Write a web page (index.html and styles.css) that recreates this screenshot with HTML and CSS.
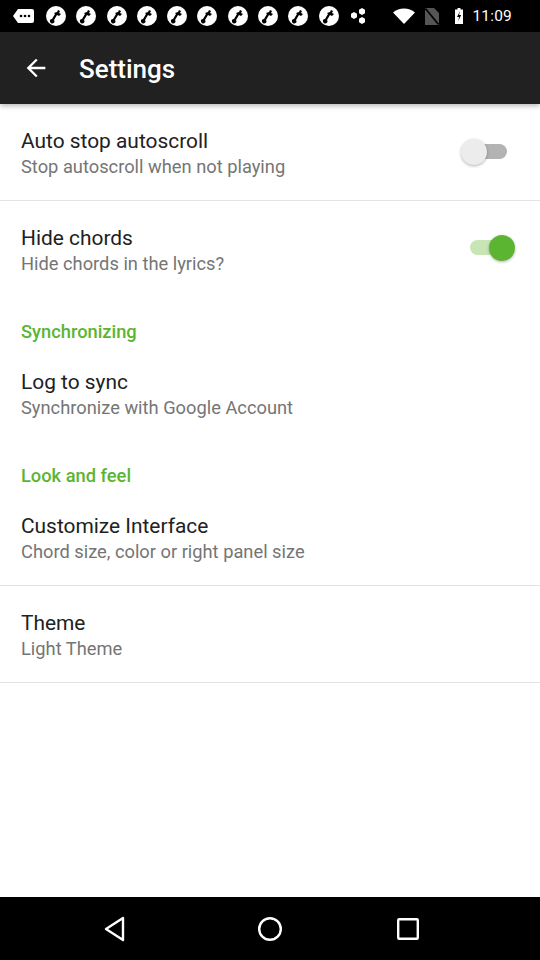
FILE: index.html
```html
<!DOCTYPE html>
<html>
<head>
<meta charset="utf-8">
<link rel="stylesheet" href="styles.css">
</head>
<body>
<div class="screen">
  <div class="statusbar">
    <div class="sb-left">
      <svg class="kb" width="21" height="14" viewBox="0 0 21 14"><path d="M5 0H19a2 2 0 0 1 2 2V12a2 2 0 0 1-2 2H5L0 7z" fill="#fff"/><circle cx="8" cy="7" r="1.3" fill="#000"/><circle cx="12" cy="7" r="1.3" fill="#000"/><circle cx="16" cy="7" r="1.3" fill="#000"/></svg>
      <div class="notifs">
        <svg class="nt" viewBox="0 0 20 20"><circle cx="10" cy="10" r="10" fill="#fff"/><path d="M12 4l2 1-1 2 2 1-2 2-2-1-3 5a2.2 2.2 0 1 1-2-1l3-5-1-1 3-1z" fill="#000"/></svg>
        <svg class="nt" viewBox="0 0 20 20"><circle cx="10" cy="10" r="10" fill="#fff"/><path d="M12 4l2 1-1 2 2 1-2 2-2-1-3 5a2.2 2.2 0 1 1-2-1l3-5-1-1 3-1z" fill="#000"/></svg>
        <svg class="nt" viewBox="0 0 20 20"><circle cx="10" cy="10" r="10" fill="#fff"/><path d="M12 4l2 1-1 2 2 1-2 2-2-1-3 5a2.2 2.2 0 1 1-2-1l3-5-1-1 3-1z" fill="#000"/></svg>
        <svg class="nt" viewBox="0 0 20 20"><circle cx="10" cy="10" r="10" fill="#fff"/><path d="M12 4l2 1-1 2 2 1-2 2-2-1-3 5a2.2 2.2 0 1 1-2-1l3-5-1-1 3-1z" fill="#000"/></svg>
        <svg class="nt" viewBox="0 0 20 20"><circle cx="10" cy="10" r="10" fill="#fff"/><path d="M12 4l2 1-1 2 2 1-2 2-2-1-3 5a2.2 2.2 0 1 1-2-1l3-5-1-1 3-1z" fill="#000"/></svg>
        <svg class="nt" viewBox="0 0 20 20"><circle cx="10" cy="10" r="10" fill="#fff"/><path d="M12 4l2 1-1 2 2 1-2 2-2-1-3 5a2.2 2.2 0 1 1-2-1l3-5-1-1 3-1z" fill="#000"/></svg>
        <svg class="nt" viewBox="0 0 20 20"><circle cx="10" cy="10" r="10" fill="#fff"/><path d="M12 4l2 1-1 2 2 1-2 2-2-1-3 5a2.2 2.2 0 1 1-2-1l3-5-1-1 3-1z" fill="#000"/></svg>
        <svg class="nt" viewBox="0 0 20 20"><circle cx="10" cy="10" r="10" fill="#fff"/><path d="M12 4l2 1-1 2 2 1-2 2-2-1-3 5a2.2 2.2 0 1 1-2-1l3-5-1-1 3-1z" fill="#000"/></svg>
        <svg class="nt" viewBox="0 0 20 20"><circle cx="10" cy="10" r="10" fill="#fff"/><path d="M12 4l2 1-1 2 2 1-2 2-2-1-3 5a2.2 2.2 0 1 1-2-1l3-5-1-1 3-1z" fill="#000"/></svg>
        <svg class="nt" viewBox="0 0 20 20"><circle cx="10" cy="10" r="10" fill="#fff"/><path d="M12 4l2 1-1 2 2 1-2 2-2-1-3 5a2.2 2.2 0 1 1-2-1l3-5-1-1 3-1z" fill="#000"/></svg>
      </div>
      <svg class="hex" width="19" height="18" viewBox="0 0 19 18"><path d="M4 5l3 1.7v3.5L4 12 1 10.2V6.7z M12 1l3 1.7v3.5L12 8 9 6.2V2.7z M12 10l3 1.7v3.5L12 17 9 15.2v-3.5z" fill="#fff"/></svg>
    </div>
    <div class="sb-right">
      <svg width="22" height="16" viewBox="0 0 22 16"><path d="M11 16L0 4.5C3 2 6.8 0.5 11 0.5S19 2 22 4.5z" fill="#fff"/></svg>
      <svg width="14" height="17" viewBox="0 0 14 17"><path d="M0 0h9l5 5v12H0z" fill="#555"/><path d="M0.5 0.5L13.5 16.5" stroke="#000" stroke-width="1.6"/></svg>
      <svg class="bat" width="8" height="16" viewBox="0 0 8 16"><path d="M2.5 0h3v1.5H8V16H0V1.5h2.5z" fill="#fff"/><path d="M5 3L2 9h2.2L3 13.5 6.2 7H4z" fill="#000"/></svg>
      <span class="time">11:09</span>
    </div>
  </div>

  <div class="appbar">
    <svg class="back" width="28" height="28" viewBox="0 0 24 24"><path d="M20 11H7.83l5.59-5.59L12 4l-8 8 8 8 1.41-1.41L7.83 13H20v-2z" fill="#fff"/></svg>
    <span class="appbar-title">Settings</span>
  </div>

  <div class="list">
    <div class="item divided">
      <div class="text">
        <div class="title">Auto stop autoscroll</div>
        <div class="summary">Stop autoscroll when not playing</div>
      </div>
      <div class="switch off"><span class="track"></span><span class="thumb"></span></div>
    </div>
    <div class="item">
      <div class="text">
        <div class="title">Hide chords</div>
        <div class="summary">Hide chords in the lyrics?</div>
      </div>
      <div class="switch on"><span class="track"></span><span class="thumb"></span></div>
    </div>

    <div class="category">Synchronizing</div>
    <div class="item">
      <div class="text">
        <div class="title">Log to sync</div>
        <div class="summary">Synchronize with Google Account</div>
      </div>
    </div>

    <div class="category">Look and feel</div>
    <div class="item divided">
      <div class="text">
        <div class="title">Customize Interface</div>
        <div class="summary">Chord size, color or right panel size</div>
      </div>
    </div>
    <div class="item divided">
      <div class="text">
        <div class="title">Theme</div>
        <div class="summary">Light Theme</div>
      </div>
    </div>
  </div>

  <div class="navbar">
    <svg class="nav-back" width="24" height="26" viewBox="0 0 24 26"><path d="M20 2L3 13l17 11z" fill="none" stroke="#fff" stroke-width="2.4" stroke-linejoin="round"/></svg>
    <svg class="nav-home" width="26" height="26" viewBox="0 0 26 26"><circle cx="13" cy="13" r="10.8" fill="none" stroke="#fff" stroke-width="2.4"/></svg>
    <svg class="nav-recent" width="24" height="24" viewBox="0 0 24 24"><rect x="2.2" y="2.2" width="19.6" height="19.6" rx="1" fill="none" stroke="#fff" stroke-width="2.4"/></svg>
  </div>
</div>
</body>
</html>
```

FILE: styles.css
```css
* { box-sizing: border-box; }
html, body { margin: 0; padding: 0; }
body {
  width: 540px;
  height: 960px;
  font-family: Roboto, "Noto Sans", Arial, sans-serif;
  background: #fff;
  overflow: hidden;
}
.screen {
  width: 540px;
  height: 960px;
  display: flex;
  flex-direction: column;
}
.statusbar {
  height: 32px;
  background: #000;
  display: flex;
  align-items: center;
  justify-content: space-between;
  padding: 0 28px 0 13px;
  flex: none;
}
.sb-left { display: flex; align-items: center; }
.kb { margin-right: 12px; }
.notifs { display: flex; gap: 10.3px; }
.nt { width: 20px; height: 20px; display: block; }
.hex { margin-left: 11px; }
.sb-right { display: flex; align-items: center; }
.sb-right svg { display: block; }
.sb-right svg + svg { margin-left: 10px; }
.sb-right .bat { margin-left: 16px; }
.time {
  color: #fff;
  font-size: 15.5px;
  margin-left: 9px;
  letter-spacing: 0.2px;
}
.appbar {
  height: 72px;
  background: #212121;
  display: flex;
  align-items: center;
  padding-left: 22px;
  box-shadow: 0 2px 5px rgba(0,0,0,0.28);
  position: relative;
  z-index: 1;
  flex: none;
}
.back { display: block; }
.appbar-title {
  color: #fff;
  font-size: 26px;
  font-weight: 500;
  margin-left: 29px;
  margin-top: 1px;
}
.list { flex: 1; }
.item {
  display: flex;
  align-items: center;
  padding: 24px 25px 20px 21px;
}
.item.divided { border-bottom: 1px solid #e3e3e3; }
.text { flex: 1; }
.title {
  font-size: 20.9px;
  line-height: 26px;
  color: #212121;
}
.summary {
  font-size: 18.3px;
  line-height: 26px;
  color: #757575;
}
.category {
  font-size: 18.3px;
  font-weight: 500;
  line-height: 24px;
  color: #5cb531;
  padding: 23px 21px 1px;
}
.switch {
  position: relative;
  width: 54px;
  height: 28px;
  flex: none;
}
.switch .track {
  position: absolute;
  left: 6px;
  top: 6.5px;
  width: 40px;
  height: 15px;
  border-radius: 8px;
}
.switch .thumb {
  position: absolute;
  top: 1px;
  width: 26px;
  height: 26px;
  border-radius: 50%;
  box-shadow: 0 1px 3px rgba(0,0,0,0.3);
}
.switch.off { margin-top: -5px; }
.switch.off .track { background: #b3b3b3; }
.switch.off .thumb { left: 0; background: #ececec; }
.switch.on { margin-top: -7px; }
.switch.on .track { background: #c8e5b6; left: 9px; }
.switch.on .thumb { left: 28px; background: #5cb531; }
.navbar {
  height: 63px;
  background: #000;
  display: flex;
  align-items: center;
  padding-left: 103px;
  flex: none;
}
.navbar svg { display: block; }
.nav-home { margin-left: 130px; }
.nav-recent { margin-left: 113px; }
```
